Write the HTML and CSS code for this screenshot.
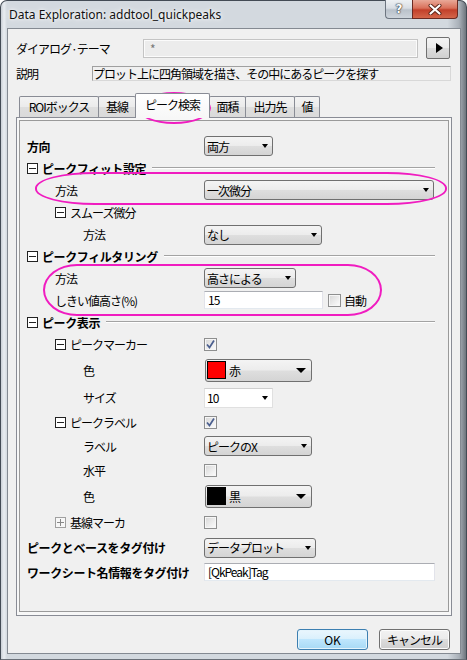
FILE: index.html
```html
<!DOCTYPE html>
<html lang="ja">
<head>
<meta charset="utf-8">
<title>Data Exploration</title>
<link rel="stylesheet" href="styles.css">
</head>
<body>
<div class="window">
  <div class="titlebar">
    <span class="title">Data Exploration: addtool_quickpeaks</span>
    <div class="caption">
      <div class="cap-btn cap-help">?</div>
      <div class="cap-btn cap-close">
        <svg width="14" height="11" viewBox="0 0 14 11"><path d="M2.5 1.5 L11.5 9.5 M11.5 1.5 L2.5 9.5" stroke="#5a2418" stroke-width="4" stroke-linecap="round"/><path d="M2.5 1.5 L11.5 9.5 M11.5 1.5 L2.5 9.5" stroke="#fff" stroke-width="2.2" stroke-linecap="round"/></svg>
      </div>
    </div>
  </div>
  <div class="client">
    <div class="theme-row">
      <span class="theme-label">ダイアログ·テーマ</span>
      <div class="theme-field">*</div>
      <div class="theme-btn"><span class="play"></span></div>
    </div>
    <div class="desc-row">
      <span class="desc-label">説明</span>
      <div class="desc-field">プロット上に四角領域を描き、その中にあるピークを探す</div>
    </div>
    <div class="tabs">
      <div class="tab tab-roi">ROIボックス</div>
      <div class="tab tab-base">基線</div>
      <div class="tab tab-sel">ピーク検索</div>
      <div class="tab tab-area">面積</div>
      <div class="tab tab-out">出力先</div>
      <div class="tab tab-val">値</div>
    </div>
    <div class="panel">
      <div class="grid">
        <div class="row h22"><span class="lbl l0 bold">方向</span><div class="val"><div class="combo w69">両方<span class="arr"></span></div></div></div>
        <div class="row h22 sec"><span class="lbl l0 bold"><span class="tg"></span>ピークフィット設定<span class="line"></span></span></div>
        <div class="row h22"><span class="lbl l1">方法</span><div class="val"><div class="combo w230">一次微分<span class="arr"></span></div></div></div>
        <div class="row h23"><span class="lbl l1"><span class="tg"></span>スムーズ微分</span></div>
        <div class="row h21"><span class="lbl l2">方法</span><div class="val"><div class="combo w118">なし<span class="arr"></span></div></div></div>
        <div class="row h22 sec"><span class="lbl l0 bold"><span class="tg"></span>ピークフィルタリング<span class="line"></span></span></div>
        <div class="row h22"><span class="lbl l1">方法</span><div class="val"><div class="combo w92">高さによる<span class="arr"></span></div></div></div>
        <div class="row h22"><span class="lbl l1">しきい値高さ(%)</span><div class="val"><div class="input w119">15</div><span class="cb cb-auto"></span><span class="cb-text">自動</span></div></div>
        <div class="row h22 sec"><span class="lbl l0 bold"><span class="tg"></span>ピーク表示<span class="line"></span></span></div>
        <div class="row h23"><span class="lbl l1"><span class="tg"></span>ピークマーカー</span><div class="val"><span class="cb checked"><svg width="11" height="11" viewBox="0 0 11 11"><path d="M2 5.5 L4.5 8.5 L9 1.5" fill="none" stroke="#4b5f8f" stroke-width="1.7"/></svg></span></div></div>
        <div class="row h28"><span class="lbl l2">色</span><div class="val"><div class="ccombo"><span class="swatch red"></span>赤<span class="arr big"></span></div></div></div>
        <div class="row h27"><span class="lbl l2">サイズ</span><div class="val"><div class="wcombo w69">10<span class="arr"></span></div></div></div>
        <div class="row h23"><span class="lbl l1"><span class="tg"></span>ピークラベル</span><div class="val"><span class="cb checked"><svg width="11" height="11" viewBox="0 0 11 11"><path d="M2 5.5 L4.5 8.5 L9 1.5" fill="none" stroke="#4b5f8f" stroke-width="1.7"/></svg></span></div></div>
        <div class="row h24"><span class="lbl l2">ラベル</span><div class="val"><div class="combo w108">ピークのX<span class="arr"></span></div></div></div>
        <div class="row h25"><span class="lbl l2">水平</span><div class="val"><span class="cb"></span></div></div>
        <div class="row h26"><span class="lbl l2">色</span><div class="val"><div class="ccombo"><span class="swatch black"></span>黒<span class="arr big"></span></div></div></div>
        <div class="row h26"><span class="lbl l1"><span class="tg plus"></span>基線マーカ</span><div class="val"><span class="cb"></span></div></div>
        <div class="row h25"><span class="lbl l0 bold">ピークとベースをタグ付け</span><div class="val"><div class="combo w112">データプロット<span class="arr"></span></div></div></div>
        <div class="row h24"><span class="lbl l0 bold">ワークシート名情報をタグ付け</span><div class="val"><div class="input w231">[QkPeak]Tag</div></div></div>
      </div>
    </div>
    <div class="buttons">
      <div class="btn btn-ok">OK</div>
      <div class="btn">キャンセル</div>
    </div>
  </div>
</div>
<div class="mark mark-tab"></div>
<div class="mark mark-fit"></div>
<div class="mark mark-filter"></div>
</body>
</html>
```
FILE: styles.css
```css
html, body {
  margin: 0;
  padding: 0;
}
body {
  position: relative;
  width: 467px;
  height: 660px;
  overflow: hidden;
  background: #fff;
  font-family: "Noto Sans CJK JP", "Noto Sans", sans-serif;
  font-size: 12px;
  color: #000;
  letter-spacing: -1px;
}
.window {
  width: 467px;
  height: 660px;
  box-sizing: border-box;
  display: flex;
  flex-direction: column;
  border: 1px solid #434b55;
  border-bottom-color: #6a7078;
  border-radius: 7px 7px 0 0;
  padding: 0 5px 5px 6px;
  background: linear-gradient(to right, #c9cfd6 0, #e9edf1 3px, #d3d9df 6px, #d3d9df 96%, #a9b0b8 98.5%, #6e757d 100%);
}
.titlebar {
  height: 27px;
  flex: none;
  display: flex;
  justify-content: space-between;
  align-items: flex-start;
}
.title {
  font-family: "Noto Sans", "Liberation Sans", sans-serif;
  font-size: 12px;
  letter-spacing: 0;
  color: #111;
  padding: 5px 0 0 2px;
  text-shadow: 0 0 6px #fff, 0 0 3px #fff;
}
.caption {
  display: flex;
  margin-top: -1px;
  margin-right: 3px;
}
.cap-btn {
  height: 19px;
  box-sizing: border-box;
  display: flex;
  align-items: center;
  justify-content: center;
}
.cap-help {
  width: 27px;
  border: 1px solid #6d7580;
  border-top: none;
  border-right: none;
  border-radius: 0 0 0 4px;
  background: linear-gradient(to bottom, #eef1f4 0, #d9dee4 45%, #b9c1ca 55%, #cdd4db 100%);
  font-family: "DejaVu Sans", sans-serif;
  font-weight: bold;
  font-size: 12px;
  letter-spacing: 0;
  color: #fff;
  text-shadow: 0 0 1px #333, 0 0 1px #333, 0 0 2px #444;
}
.cap-close {
  width: 46px;
  border: 1px solid #6b2a22;
  border-top: none;
  border-radius: 0 0 4px 0;
  background: linear-gradient(to bottom, #e9a998 0, #d9705a 45%, #c2402a 55%, #d4664a 100%);
}
.client {
  flex: 1;
  background: #f0f0f0;
  border: 1px solid #848a92;
  display: flex;
  flex-direction: column;
}
.theme-row {
  display: flex;
  align-items: center;
  height: 22px;
  margin: 8px 0 0 8px;
}
.theme-label {
  width: 127px;
}
.theme-field {
  width: 275px;
  height: 19px;
  box-sizing: border-box;
  border: 1px solid #c4c4c4;
  box-shadow: inset 0 0 0 1px #fbfbfb;
  background: #ececec;
  color: #777;
  padding-left: 6px;
  line-height: 17px;
}
.theme-btn {
  width: 24px;
  height: 22px;
  margin-left: 8px;
  box-sizing: border-box;
  border: 1px solid #707070;
  border-radius: 2px;
  background: linear-gradient(to bottom, #f4f4f4 0, #ebebeb 50%, #dddddd 50%, #d0d0d0 100%);
  display: flex;
  align-items: center;
  justify-content: center;
}
.play {
  width: 0;
  height: 0;
  border-top: 5px solid transparent;
  border-bottom: 5px solid transparent;
  border-left: 7px solid #000;
  margin-left: 2px;
}
.desc-row {
  display: flex;
  align-items: center;
  height: 15px;
  margin: 7px 0 0 8px;
}
.desc-label {
  width: 76px;
}
.desc-field {
  width: 359px;
  height: 15px;
  box-sizing: border-box;
  border: 1px solid #a0a0a0;
  border-right-color: #d8d8d8;
  border-bottom-color: #d8d8d8;
  line-height: 13px;
  white-space: nowrap;
  overflow: hidden;
}
.tabs {
  display: flex;
  align-items: flex-end;
  height: 24px;
  margin: 12px 0 0 11px;
}
.tab {
  height: 21px;
  box-sizing: border-box;
  border: 1px solid #898c95;
  border-bottom: none;
  border-radius: 2px 2px 0 0;
  margin-left: -1px;
  background: linear-gradient(to bottom, #f3f3f3 0, #ebebeb 50%, #dedede 50%, #dadada 100%);
  display: flex;
  align-items: center;
  justify-content: center;
  line-height: 1;
  padding-bottom: 1px;
}
.tab-roi { width: 80px; margin-left: 0; }
.tab-base { width: 38px; }
.tab-sel {
  width: 75px;
  height: 25px;
  margin-bottom: -1px;
  position: relative;
  z-index: 1;
  background: linear-gradient(to bottom, #ffffff 0, #f7f7f7 100%);
  padding-bottom: 2px;
}
.tab-area { width: 37px; }
.tab-out { width: 50px; }
.tab-val { width: 26px; }
.panel {
  height: 499px;
  flex: none;
  box-sizing: border-box;
  margin: 0 8px 0 8px;
  border: 1px solid #898c95;
  padding: 2px 2px 3px 2px;
  background: #f7f7f7;
}
.grid {
  height: 100%;
  box-sizing: border-box;
  border: 1px solid #9a9a9a;
  background: #f0f0f0;
  padding: 14px 13px 0 0;
}
.row {
  display: flex;
  align-items: center;
}
.h21 { height: 21px; }
.h22 { height: 22px; }
.h23 { height: 23px; }
.h24 { height: 24px; }
.h25 { height: 25px; }
.h26 { height: 26px; }
.h27 { height: 27px; }
.h28 { height: 28px; }
.lbl {
  width: 184px;
  flex: none;
  box-sizing: border-box;
  display: flex;
  align-items: center;
  white-space: nowrap;
}
.l0 { padding-left: 7px; }
.l1 { padding-left: 35px; }
.l2 { padding-left: 63px; }
.bold {
  font-weight: bold;
  letter-spacing: -0.4px;
}
.sec .lbl {
  width: auto;
  flex: 1;
}
.line {
  flex: 1;
  height: 1px;
  background: #a3a3a3;
  border-bottom: 1px solid #fff;
  margin-left: 6px;
}
.tg {
  width: 9px;
  height: 9px;
  border: 1px solid #222;
  margin-right: 4px;
  flex: none;
  position: relative;
  background: #fff;
}
.tg::after {
  content: "";
  position: absolute;
  left: 1px;
  right: 1px;
  top: 4px;
  height: 1px;
  background: #222;
}
.tg.plus {
  border-color: #a0a0a0;
  background: #f7f7f7;
}
.tg.plus::after {
  background: #888;
}
.tg.plus::before {
  content: "";
  position: absolute;
  top: 1px;
  bottom: 1px;
  left: 4px;
  width: 1px;
  background: #888;
}
.val {
  display: flex;
  align-items: center;
}
.combo, .wcombo {
  height: 20px;
  box-sizing: border-box;
  border: 1px solid #707070;
  border-radius: 3px;
  background: linear-gradient(to bottom, #f4f4f4 0, #ececec 48%, #dedede 52%, #d4d4d4 100%);
  display: flex;
  align-items: center;
  padding-left: 2px;
  white-space: nowrap;
}
.wcombo {
  background: #fff;
  border: 1px solid #e0e0e0;
  border-top-color: #cfcfcf;
  border-radius: 0;
}
.w69 { width: 69px; }
.w92 { width: 92px; }
.w108 { width: 108px; }
.w112 { width: 112px; }
.w118 { width: 118px; }
.w119 { width: 119px; }
.w230 { width: 230px; }
.w231 { width: 231px; }
.arr {
  margin-left: auto;
  margin-right: 4px;
  width: 0;
  height: 0;
  border-left: 3.5px solid transparent;
  border-right: 3.5px solid transparent;
  border-top: 4px solid #000;
}
.arr.big {
  margin-right: 5px;
  border-left-width: 5px;
  border-right-width: 5px;
  border-top-width: 5px;
}
.input {
  height: 18px;
  box-sizing: border-box;
  background: #fff;
  border: 1px solid #e2e3ea;
  border-top-color: #abadb3;
  border-bottom-color: #e3e9ef;
  padding-left: 3px;
  line-height: 16px;
  white-space: nowrap;
}
.cb {
  width: 13px;
  height: 13px;
  box-sizing: border-box;
  border: 1px solid #8e8f8f;
  background: linear-gradient(135deg, #d6d6d6 0, #f2f2f2 70%, #fdfdfd 100%);
  box-shadow: inset 0 0 0 1px #f6f6f6;
  display: flex;
  align-items: center;
  justify-content: center;
  flex: none;
}
.cb-auto {
  margin-left: 5px;
}
.cb-text {
  margin-left: 3px;
}
.ccombo {
  width: 107px;
  height: 23px;
  margin-left: 1px;
  box-sizing: border-box;
  border: 1px solid #707070;
  border-radius: 3px;
  background: linear-gradient(to bottom, #f4f4f4 0, #ececec 48%, #dedede 52%, #d4d4d4 100%);
  display: flex;
  align-items: center;
  padding-left: 1px;
}
.swatch {
  width: 19px;
  height: 18px;
  box-sizing: border-box;
  border: 1px solid #000;
  margin-right: 3px;
}
.swatch.red { background: #ff0000; }
.swatch.black { background: #000; }
.buttons {
  display: flex;
  justify-content: flex-end;
  gap: 11px;
  margin: 13px 10px 0 0;
}
.btn {
  width: 71px;
  height: 21px;
  box-sizing: border-box;
  border: 1px solid #707070;
  border-radius: 3px;
  background: linear-gradient(to bottom, #f2f2f2 0, #ebebeb 50%, #dddddd 50%, #cfcfcf 100%);
  box-shadow: inset 0 0 0 1px #fcfcfc;
  display: flex;
  align-items: center;
  justify-content: center;
  line-height: 1;
}
.btn-ok {
  border-color: #3c7fb1;
  background: linear-gradient(to bottom, #eaf6fd 0, #d9f0fc 50%, #bee6fd 50%, #a7d9f5 100%);
  box-shadow: inset 0 0 0 1px #e4f4fc;
  letter-spacing: 0;
}
.mark {
  position: absolute;
  box-sizing: border-box;
  border: 2px solid #f01cc0;
}
.mark-tab {
  left: 137px;
  top: 92px;
  width: 74px;
  height: 32px;
  border-radius: 50%;
}
.mark-fit {
  left: 35px;
  top: 172px;
  width: 412px;
  height: 33px;
  border-radius: 60px / 16px;
}
.mark-filter {
  left: 43px;
  top: 264px;
  width: 339px;
  height: 52px;
  border-radius: 34px / 26px;
}
```
